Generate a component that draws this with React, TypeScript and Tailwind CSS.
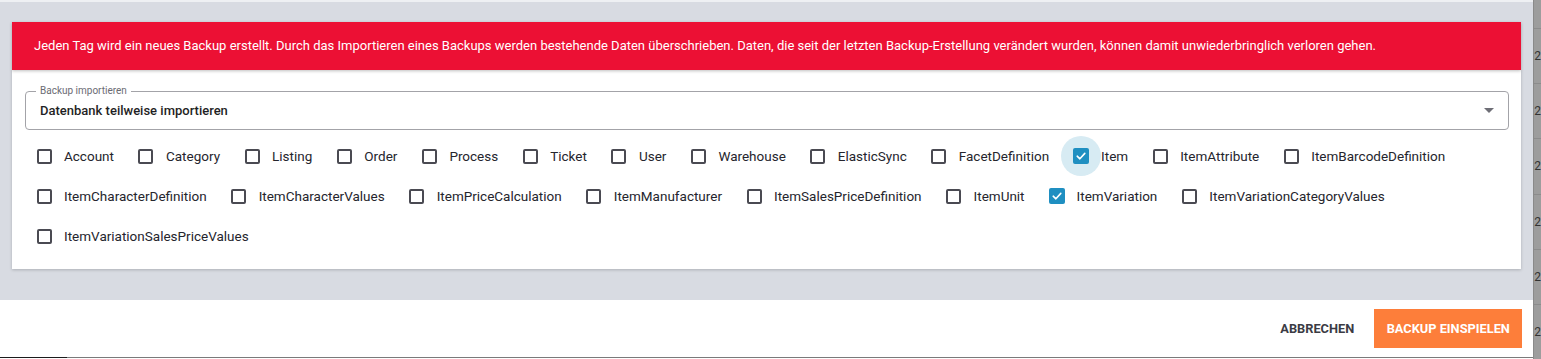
const tables = [
  "Account",
  "Category",
  "Listing",
  "Order",
  "Process",
  "Ticket",
  "User",
  "Warehouse",
  "ElasticSync",
  "FacetDefinition",
  "Item",
  "ItemAttribute",
  "ItemBarcodeDefinition",
  "ItemCharacterDefinition",
  "ItemCharacterValues",
  "ItemPriceCalculation",
  "ItemManufacturer",
  "ItemSalesPriceDefinition",
  "ItemUnit",
  "ItemVariation",
  "ItemVariationCategoryValues",
  "ItemVariationSalesPriceValues",
]

const checked = ["Item", "ItemVariation"]
const focused = "Item"

function CheckItem({ label }: { label: string }) {
  const isChecked = checked.includes(label)
  return (
    <label className="flex items-center h-[40px] cursor-pointer">
      <span
        className={
          "w-[40px] h-[40px] flex items-center justify-center rounded-full " +
          (label === focused ? "bg-[#d7ebf3]" : "")
        }
      >
        {isChecked ? (
          <span className="w-[16px] h-[16px] rounded-[2px] bg-[#1f8fc1] flex items-center justify-center">
            <svg width="12" height="12" viewBox="0 0 12 12" fill="none">
              <path d="M2.2 6.2 L4.9 8.8 L9.8 3.4" stroke="white" strokeWidth="1.6" strokeLinecap="round" strokeLinejoin="round" />
            </svg>
          </span>
        ) : (
          <span className="w-[15px] h-[15px] rounded-[2px] border-2 border-[#4a4a52]" />
        )}
      </span>
      <span className="text-[13.5px] text-[#25252d]">{label}</span>
    </label>
  )
}

export default function App() {
  return (
    <div className="w-[1541px] h-[359px] flex bg-white overflow-hidden font-['Roboto','Liberation_Sans',sans-serif]">
      <div className="w-[1535px] flex flex-col">
        <div className="h-[2px] bg-[#eef0f3]" />
        <div className="h-[298px] bg-[#d8dbe2] pt-[20px] px-[12px]">
          <div className="h-[48px] bg-[#ec1034] pl-[22px] flex items-center text-white text-[13px] shadow-[0_1px_3px_rgba(0,0,0,0.25)] relative">
            Jeden Tag wird ein neues Backup erstellt. Durch das Importieren eines Backups werden bestehende Daten überschrieben. Daten, die seit der letzten Backup-Erstellung verändert wurden, können damit unwiederbringlich verloren gehen.
          </div>
          <div className="bg-white h-[199px] pt-[21px] px-[12px] shadow-[0_1px_3px_rgba(0,0,0,0.2)]">
            <div className="relative ml-[1px] h-[39px] border border-[#a3a3a8] rounded-[4px] flex items-center pl-[14px] pr-[14px]">
              <span className="absolute -top-[7px] left-[10px] bg-white px-[4px] text-[10px] leading-[12px] text-[#6b6b73]">
                Backup importieren
              </span>
              <span className="flex-1 text-[13px] font-medium text-[#1f1f25]">Datenbank teilweise importieren</span>
              <svg width="10" height="5" viewBox="0 0 10 5">
                <path d="M0 0 L10 0 L5 5 Z" fill="#6e6e76" />
              </svg>
            </div>
            <div className="flex flex-wrap gap-x-[12px] mt-[6px]">
              {tables.map((t) => (
                <CheckItem key={t} label={t} />
              ))}
            </div>
          </div>
        </div>
        <div className="h-[58px] flex flex-col">
          <div className="flex-1 flex items-center justify-end pr-[11px]">
            <button className="h-[39px] px-[16px] text-[12.8px] font-bold text-[#3b3b44] uppercase">Abbrechen</button>
            <button className="h-[39px] w-[148px] ml-[4px] bg-[#fd7e3a] text-white text-[12.8px] font-bold uppercase">
              Backup einspielen
            </button>
          </div>
          <div className="h-[1px] flex">
            <div className="w-[67px] bg-[#1c1c1c]" />
            <div className="flex-1 bg-[#7a7a7a]" />
          </div>
        </div>
      </div>
      <div className="flex-1 bg-[#9d9d9d] border-l border-[#8a8a8a] flex flex-col pt-[28px]">
        {[0, 1, 2, 3, 4, 5].map((i) => (
          <div key={i} className="h-[57px] border-t border-[#8c8c8c] flex items-center text-[12px] text-[#333] leading-none">
            2
          </div>
        ))}
      </div>
    </div>
  )
}
